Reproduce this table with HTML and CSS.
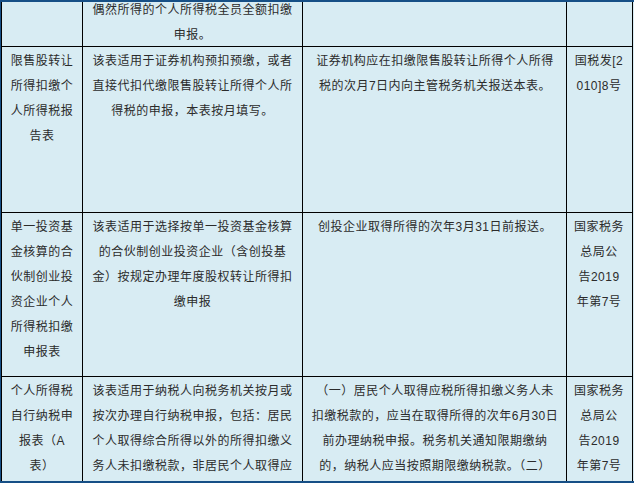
FILE: index.html
```html
<!DOCTYPE html>
<html lang="zh-CN">
<head>
<meta charset="utf-8">
<title>个人所得税申报表</title>
<link rel="stylesheet" href="styles.css">
</head>
<body>
<div class="frame">
  <div class="grid">
    <div class="cell c1 cut"></div>
    <div class="cell c2 cut"><div class="lead">偶然所得的个人所得税全员全额扣缴申报。</div></div>
    <div class="cell c3 cut"></div>
    <div class="cell c4 cut"></div>

    <div class="cell c1">限售股转让所得扣缴个人所得税报告表</div>
    <div class="cell c2">该表适用于证券机构预扣预缴，或者直接代扣代缴限售股转让所得个人所得税的申报，本表按月填写。</div>
    <div class="cell c3">证券机构应在扣缴限售股转让所得个人所得税的次月7日内向主管税务机关报送本表。</div>
    <div class="cell c4">国税发[2010]8号</div>

    <div class="cell c1">单一投资基金核算的合伙制创业投资企业个人所得税扣缴申报表</div>
    <div class="cell c2">该表适用于选择按单一投资基金核算的合伙制创业投资企业（含创投基金）按规定办理年度股权转让所得扣缴申报</div>
    <div class="cell c3">创投企业取得所得的次年3月31日前报送。</div>
    <div class="cell c4">国家税务总局公<span class="keep">告2019</span>年第7号</div>

    <div class="cell c1">个人所得税自行纳税申报表（A表）</div>
    <div class="cell c2">该表适用于纳税人向税务机关按月或按次办理自行纳税申报，包括：居民个人取得综合所得以外的所得扣缴义务人未扣缴税款，非居民个人取得应</div>
    <div class="cell c3">（一）居民个人取得应税所得扣缴义务人未扣缴税款的，应当在取得所得的次年6月30日前办理纳税申报。税务机关通知限期缴纳的，纳税人应当按照期限缴纳税款。（二）</div>
    <div class="cell c4">国家税务总局公<span class="keep">告2019</span>年第7号</div>
  </div>
</div>
</body>
</html>
```

FILE: styles.css
```css
html, body {
  margin: 0;
  padding: 0;
  background: #d8ecf3;
}

.frame {
  box-sizing: border-box;
  width: 634px;
  height: 483px;
  overflow: hidden;
  border-top: 2px solid #164f86;
  border-left: 1px solid #164f86;
  border-bottom: 2px solid #164f86;
  background: #d8ecf3;
}

.grid {
  width: 632px;
  box-sizing: border-box;
  display: grid;
  grid-template-columns: 80px 219px 263px 65px;
  grid-template-rows: 44px 165px 163px 140px;
  gap: 1px;
  padding: 0 1px;
  background: #000;
}

.cell {
  background: #d8ecf3;
  color: #2b2b2b;
  font-family: "Liberation Sans", "Noto Sans CJK SC", sans-serif;
  font-size: 12px;
  letter-spacing: 0.5px;
  line-height: 25px;
  text-align: center;
  padding-top: 2px;
  overflow: hidden;
}

.cut {
  padding-top: 0;
}

.lead {
  margin-top: -4px;
}

.c1 {
  padding-left: 8px;
  padding-right: 8px;
}

.c2 {
  padding-left: 8px;
  padding-right: 8px;
}

.c3 {
  padding-left: 8px;
  padding-right: 7px;
}

.c4 {
  padding-left: 6px;
  padding-right: 7px;
  word-break: break-all;
}

.keep {
  white-space: nowrap;
}
```
